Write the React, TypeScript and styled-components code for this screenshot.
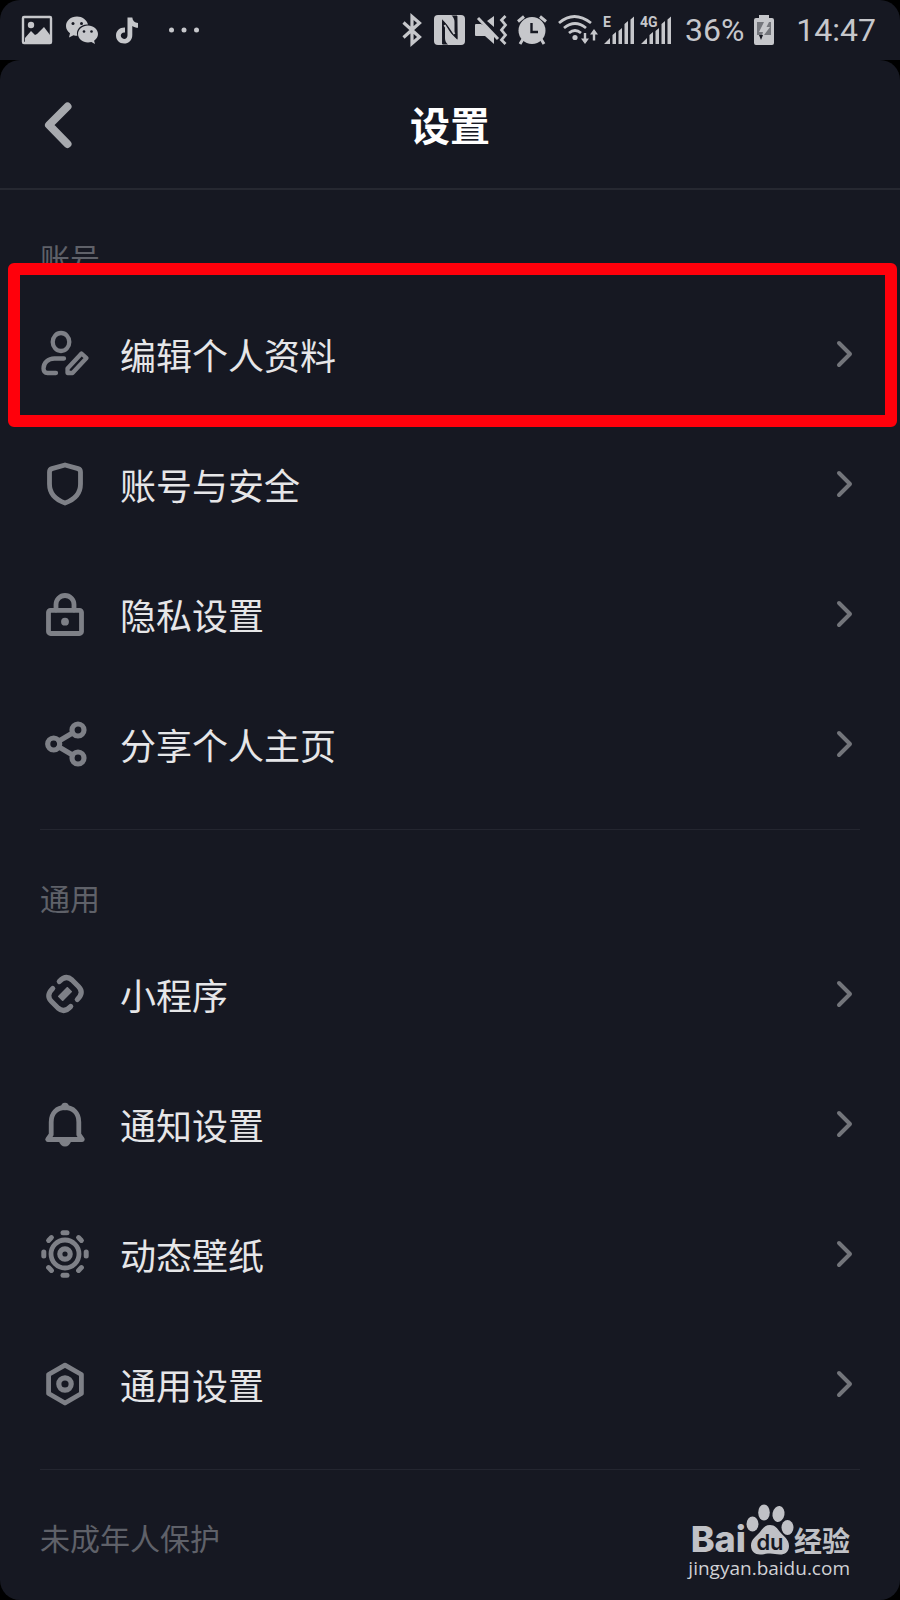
import React from "react";
import styled, { createGlobalStyle } from "styled-components";

const GlobalStyle = createGlobalStyle`
  *, *::before, *::after { box-sizing: border-box; }
  body { margin: 0; background: #000; }
`;

const Screen = styled.div`
  display: flex;
  flex-direction: column;
  min-height: 100vh;
  background: #000;
  color: #e6e6e8;
  font-family: "Noto Sans CJK SC", sans-serif;
`;

const StatusBar = styled.div`
  display: flex;
  align-items: center;
  justify-content: space-between;
  height: 60px;
  padding: 0 24px 0 22px;
  border-radius: 20px 20px 0 0;
  background: #161822;
  color: #c6c7cb;
`;

const StatusGroup = styled.div<{ $gap: number }>`
  display: flex;
  align-items: center;
  gap: ${(p) => p.$gap}px;
`;

const StatusText = styled.span<{ $lead: number }>`
  padding-left: ${(p) => p.$lead}px;
  font: 400 32px/60px Roboto, sans-serif;
`;

const Glyph = styled.svg`
  display: block;
  flex: none;
  overflow: visible;
`;

const Panel = styled.main`
  position: relative;
  flex: 1;
  padding-bottom: 44px;
  border-radius: 20px;
  background: #161822;
`;

const Header = styled.header`
  display: grid;
  grid-template-columns: 50px 1fr 50px;
  align-items: center;
  height: 130px;
  padding: 0 40px;
  border-bottom: 2px solid #262831;
`;

const Title = styled.h1`
  margin: 0;
  color: #fff;
  font-size: 40px;
  font-weight: 700;
  line-height: 60px;
  text-align: center;
`;

const BackButton = styled.button`
  width: 50px;
  height: 50px;
  padding: 0;
  border: 0;
  background: none;
  color: #a7a9ae;
  cursor: pointer;
`;

const Section = styled.section`
  margin: 0 40px;
  padding: 48px 0 20px;

  & + & {
    border-top: 1px solid #242630;
  }

  &:last-of-type {
    padding-bottom: 0;
  }
`;

const SectionTitle = styled.h2`
  margin: 0;
  color: #5f6169;
  font-size: 30px;
  font-weight: 400;
  line-height: 38px;
`;

const List = styled.ul`
  margin: 13px 0 0;
  padding: 0;
  list-style: none;
`;

const Item = styled.li`
  position: relative;
`;

const ItemLink = styled.a`
  display: grid;
  grid-template-columns: 50px 1fr 30px;
  column-gap: 30px;
  align-items: center;
  height: 130px;
  color: inherit;
  font-size: 36px;
  line-height: 50px;
  text-decoration: none;
`;

const ItemIcon = styled(Glyph)`
  color: #7e8087;
`;

const Chevron = styled(Glyph)`
  color: #73757b;
`;

const Highlight = styled.span`
  position: absolute;
  inset: -26px -37px -8px -32px;
  border: 12px solid #ff000b;
  border-radius: 6px;
  pointer-events: none;
`;

const Watermark = styled.div`
  position: absolute;
  right: 50px;
  bottom: 20px;
  display: flex;
  flex-direction: column;
  align-items: flex-end;
  color: #c0c1c6;
`;

const Logo = styled.div`
  display: flex;
  align-items: flex-end;
`;

const LogoLatin = styled.span`
  font: 800 36px/34px Inter, sans-serif;
`;

const LogoHan = styled.span`
  font-size: 28px;
  font-weight: 700;
  line-height: 32px;
`;

const SiteName = styled.span`
  color: #d0d1d5;
  font: 400 19px/24px "Open Sans", sans-serif;
`;

function PhotoIcon() {
  return (
    <Glyph width="30" height="30" viewBox="0 0 30 30" fill="none">
      <rect x="1" y="2" width="28" height="26" rx="1" stroke="currentColor" strokeWidth="2.4" />
      <circle cx="9" cy="10" r="3.2" fill="currentColor" />
      <path d="M3 23l6-7 4 4 2-1 7-7 6 8v8H3z" fill="currentColor" />
    </Glyph>
  );
}

function ChatIcon() {
  return (
    <Glyph width="32" height="30" viewBox="0 0 32 30" fill="currentColor">
      <path d="M11 1.500C4.800 1.500 0 5.700 0 11c0 3 1.600 5.500 4 7.300L3 22.500l4.500-2.300c1.300.4 2.500.5 3.800.5C9.500 14 15.500 8.800 22 9.500 20.800 4.800 16.300 1.500 11 1.500z" />
      <path d="M22 10.500c-5.500 0-10 3.800-10 8.600s4.500 8.500 10 8.500c1.200 0 2.300-.2 3.400-.5l3.600 2-.9-3.400c2.400-1.600 3.900-4 3.900-6.600 0-4.800-4.500-8.600-10-8.600z" />
      <g fill="#161822">
        <circle cx="7" cy="8.500" r="1.500" />
        <circle cx="15.500" cy="8.500" r="1.500" />
        <circle cx="18" cy="16.500" r="1.300" />
        <circle cx="25.500" cy="16.500" r="1.300" />
      </g>
    </Glyph>
  );
}

function NoteIcon() {
  return (
    <Glyph width="30" height="30" viewBox="0 0 30 30" fill="currentColor">
      <path d="M15.500 2.500h4.800c.3 3.300 2.400 5.300 5.700 5.600v4.700c-2.200 0-4-.6-5.700-1.800v9c0 5.300-3.600 8.600-8.200 8.600-4.700 0-8.100-3.500-8.100-8 0-4.800 3.700-8.200 9-8v4.900c-2.500-.4-4.200 1-4.200 3.100 0 1.900 1.500 3.300 3.300 3.300 2 0 3.400-1.500 3.400-3.700z" />
    </Glyph>
  );
}

function DotsIcon() {
  return (
    <Glyph width="44" height="30" viewBox="0 0 44 30" fill="currentColor">
      <circle cx="15.500" cy="15" r="2.500" />
      <circle cx="28" cy="15" r="2.500" />
      <circle cx="40.500" cy="15" r="2.500" />
    </Glyph>
  );
}

function BluetoothIcon() {
  return (
    <Glyph width="24" height="34" viewBox="0 0 24 34" fill="none" stroke="currentColor" strokeWidth="3.200">
      <path d="M3.500 9.500l16 14.500-7.500 6.500v-27l7.500 6.500-16 14.500" />
    </Glyph>
  );
}

function NfcIcon() {
  return (
    <Glyph width="31" height="30" viewBox="0 0 31 30" fill="none">
      <rect width="31" height="30" rx="4" fill="currentColor" />
      <path d="M9 29V6.500L22.500 21M22.500 1v21.500L9 9" stroke="#161822" strokeWidth="1.800" />
      <path d="M8 6l3 3v14q0 4 3 6.500H8.500zM23.500 24l-3-3V7q0-4-3-6.500H23z" fill="#161822" />
      <path d="M10.500 10l10 16M10.500 4l10 15" stroke="currentColor" strokeWidth="2" />
    </Glyph>
  );
}

function MuteIcon() {
  return (
    <Glyph width="32" height="30" viewBox="0 0 32 30" fill="none">
      <path d="M1 9h5l3 1.500L19 20v9l-9-8H1q-1 0-1-1V10q0-1 1-1zM12 6l7-5v11z" fill="currentColor" />
      <path d="M3 3l20 21" stroke="currentColor" strokeWidth="3" />
      <path d="M30.500 1l-4 4 4 5-4 5 4 5-4 5 4 4" stroke="currentColor" strokeWidth="2.800" />
    </Glyph>
  );
}

function AlarmIcon() {
  return (
    <Glyph width="30" height="30" viewBox="0 0 30 30" fill="none" stroke="currentColor" strokeWidth="3">
      <circle cx="15" cy="15.500" r="13.500" fill="currentColor" stroke="none" />
      <path d="M1 6.500l6-5M29 6.500l-6-5M6 24l-3 5M24 24l3 5" />
      <path d="M14.500 8v9H21" stroke="#161822" strokeWidth="2.400" />
    </Glyph>
  );
}

function WifiIcon() {
  return (
    <Glyph width="40" height="30" viewBox="0 0 40 30" fill="none" stroke="currentColor" strokeWidth="2.800">
      <path d="M2 8Q17-5 34 8M7 13q11-9 22 0M12 18q6-5 12 0" />
      <circle cx="18" cy="22.500" r="2.600" fill="currentColor" stroke="none" />
      <path d="M28 18v9M37 25.500v-9" strokeWidth="2.400" />
      <path d="M24 23.500h8l-4 5.500zM33 19.500h8l-4-5.500z" fill="currentColor" stroke="none" />
    </Glyph>
  );
}

function SignalIcon({ label }: { label: string }) {
  return (
    <Glyph width="30" height="28" viewBox="0 0 30 28" fill="currentColor">
      <text x="-1" y="11" fontFamily="Roboto, sans-serif" fontSize="14" fontWeight="700">
        {label}
      </text>
      <path d="M0 28l6-6v6zM8.500 28v-9l3.500-3v12zM14.500 28V15l3.500-3v16zM20.500 28V8l3.500-3v23zM26.500 28V3.500L30 .5V28z" />
    </Glyph>
  );
}

function BatteryIcon() {
  return (
    <Glyph width="20" height="30" viewBox="0 0 20 30">
      <path d="M5 0h10v3h3q2 0 2 2v23q0 2-2 2H2q-2 0-2-2V5q0-2 2-2h3z" fill="currentColor" />
      <path d="M3 7h14v13H3z" fill="#74767c" />
      <path d="M10 7h5l-2.500 5H16l-9 12 2-7H5z" fill="currentColor" />
      <path d="M5 20h4l-2 5z" fill="#161822" />
    </Glyph>
  );
}

const line = {
  fill: "none",
  stroke: "currentColor",
  strokeWidth: 4.8,
  strokeLinecap: "round",
  strokeLinejoin: "round",
} as const;

const icons = {
  profile: (
    <g {...line} strokeWidth={4.300}>
      <ellipse cx="21" cy="13" rx="8.300" ry="9" />
      <path d="M24 29.500H14.500C8 29.500 3.500 34 3.500 39.500c0 3 1.300 4.500 4 4.500H16" />
      <path d="M27.500 39.500V44H32.500l14-15-5-4.500z" />
    </g>
  ),
  shield: (
    <path
      {...line}
      d="M25 6l13 3.600q2.500.8 2.500 3.400v12c0 10-7 16-15.500 19C16.500 41 9.500 35 9.500 25V13q0-2.600 2.500-3.400z"
    />
  ),
  lock: (
    <g {...line}>
      <rect x="8.500" y="21.300" width="33" height="23.200" rx="2" />
      <path d="M16 21v-5.500a9 9 0 0 1 18 0V21" />
      <circle cx="25" cy="32.700" r="3.900" fill="currentColor" stroke="none" />
    </g>
  ),
  share: (
    <g {...line} strokeWidth={5.200}>
      <path d="M19 22l13.500-8M19 28l13.500 8" />
      <circle cx="38" cy="11" r="6" />
      <circle cx="13.700" cy="25" r="6" />
      <circle cx="38" cy="39" r="6" />
    </g>
  ),
  miniApp: (
    <g {...line} strokeWidth={5.200}>
      <path d="M19.300 12.500q6.500-7 12.700-1.500l6.500 6.500q6 6-1.200 13" />
      <path d="M30.700 37.500q-6.500 7-12.700 1.500l-6.500-6.500q-6-6 1.200-13" />
      <rect x="18.200" y="21.500" width="13.600" height="7" rx=".5" transform="rotate(-45 25 25)" fill="currentColor" stroke="none" />
    </g>
  ),
  bell: (
    <g {...line}>
      <path d="M7.700 40.500h34.600l-3.500-5V23C38.800 14 33 8.500 25 8.500S11.200 14 11.200 23v12.500z" />
      <circle cx="25" cy="7.500" r="3.800" fill="currentColor" stroke="none" />
      <path d="M18.500 41.500h13q-2 6-6.500 6t-6.500-6z" fill="currentColor" stroke="none" />
    </g>
  ),
  wallpaper: (
    <g {...line}>
      <circle cx="25" cy="25" r="14" />
      <circle cx="25" cy="25" r="5.200" strokeWidth={5.200} />
      {[0, 45, 90, 135, 180, 225, 270, 315].map((angle) => (
        <path key={angle} d="M23 3.800h4" strokeWidth={5} transform={`rotate(${angle} 25 25)`} />
      ))}
    </g>
  ),
  general: (
    <g {...line}>
      <path d="M25 6.200l16.400 9.300v19L25 44 8.600 34.500v-19z" />
      <circle cx="25" cy="25" r="6.200" strokeWidth={5.200} />
    </g>
  ),
};

type IconName = keyof typeof icons;

interface Entry {
  icon: IconName;
  text: string;
  highlighted?: boolean;
}

const sections: { title: string; entries: Entry[] }[] = [
  {
    title: "账号",
    entries: [
      { icon: "profile", text: "编辑个人资料", highlighted: true },
      { icon: "shield", text: "账号与安全" },
      { icon: "lock", text: "隐私设置" },
      { icon: "share", text: "分享个人主页" },
    ],
  },
  {
    title: "通用",
    entries: [
      { icon: "miniApp", text: "小程序" },
      { icon: "bell", text: "通知设置" },
      { icon: "wallpaper", text: "动态壁纸" },
      { icon: "general", text: "通用设置" },
    ],
  },
  { title: "未成年人保护", entries: [] },
];

function SettingsItem({ icon, text, highlighted }: Entry) {
  return (
    <Item>
      <ItemLink href={`#${icon}`}>
        <ItemIcon width="50" height="50" viewBox="0 0 50 50" aria-hidden="true">
          {icons[icon]}
        </ItemIcon>
        <span>{text}</span>
        <Chevron width="30" height="30" viewBox="0 0 30 30" aria-hidden="true">
          <path {...line} strokeWidth={4} d="M9 4l11 11L9 26" />
        </Chevron>
      </ItemLink>
      {highlighted && <Highlight />}
    </Item>
  );
}

function BaiduWatermark() {
  return (
    <Watermark>
      <Logo>
        <LogoLatin>Bai</LogoLatin>
        <Glyph width="48" height="54" viewBox="0 0 48 54" fill="currentColor">
          <ellipse cx="6.500" cy="22" rx="6" ry="7.500" />
          <ellipse cx="18" cy="10.500" rx="5.800" ry="8" />
          <ellipse cx="32.500" cy="12" rx="6" ry="8" transform="rotate(10 32.500 12)" />
          <ellipse cx="41.500" cy="25.500" rx="6" ry="7.500" />
          <path d="M24 23c5 0 7.500 3.500 10 7 3.500 4.500 9 7 9 14 0 6-4 8.500-9 8.500-4 0-6-1-10-1s-6 1-10 1c-5 0-9-3-9-9 0-6.500 5.500-9 9-13.500 2.500-3.500 5-7 10-7z" />
          <text x="24" y="48" textAnchor="middle" fill="#161822" fontFamily="Inter, sans-serif" fontSize="22" fontWeight="600">
            du
          </text>
        </Glyph>
        <LogoHan>经验</LogoHan>
      </Logo>
      <SiteName>jingyan.baidu.com</SiteName>
    </Watermark>
  );
}

export default function App() {
  return (
    <Screen>
      <GlobalStyle />
      <StatusBar>
        <StatusGroup $gap={14}>
          <PhotoIcon />
          <ChatIcon />
          <NoteIcon />
          <DotsIcon />
        </StatusGroup>
        <StatusGroup $gap={10}>
          <BluetoothIcon />
          <NfcIcon />
          <MuteIcon />
          <AlarmIcon />
          <StatusGroup $gap={7}>
            <WifiIcon />
            <SignalIcon label="E" />
            <SignalIcon label="4G" />
          </StatusGroup>
          <StatusText $lead={4}>36%</StatusText>
          <BatteryIcon />
          <StatusText $lead={12}>14:47</StatusText>
        </StatusGroup>
      </StatusBar>
      <Panel>
        <Header>
          <BackButton aria-label="返回">
            <Glyph width="50" height="50" viewBox="0 0 50 50" aria-hidden="true">
              <path {...line} strokeWidth={8} d="M27.500 7.500L9 26l18.500 19" />
            </Glyph>
          </BackButton>
          <Title>设置</Title>
        </Header>
        {sections.map((section) => (
          <Section key={section.title}>
            <SectionTitle>{section.title}</SectionTitle>
            {section.entries.length > 0 && (
              <List>
                {section.entries.map((entry) => (
                  <SettingsItem key={entry.text} {...entry} />
                ))}
              </List>
            )}
          </Section>
        ))}
        <BaiduWatermark />
      </Panel>
    </Screen>
  );
}
